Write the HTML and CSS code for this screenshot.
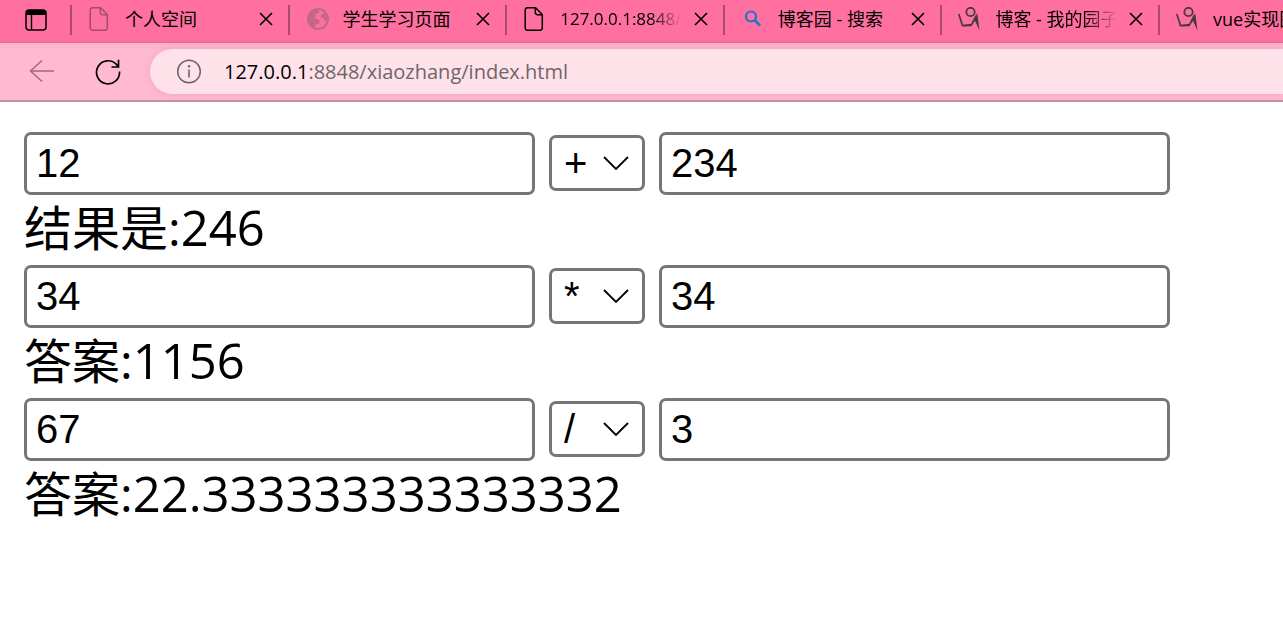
FILE: index.html
```
<!DOCTYPE html>
<html lang="zh-CN">
<head>
    <meta charset="UTF-8">
    <meta name="viewport" content="width=device-width, initial-scale=1.0">
    <title>127.0.0.1:8848/xiaozhang/index.html</title>
    <link rel="stylesheet" href="styles.css">
</head>
<body>
    <!-- 公用图标 -->
    <svg class="sprite" aria-hidden="true">
        <symbol id="icon-file" viewBox="0 0 24 24">
            <path d="M4.500 .7H12.500L19.300 7.500V21a2.300 2.300 0 0 1-2.300 2.300H4.500A2.300 2.300 0 0 1 2.200 21V3A2.300 2.300 0 0 1 4.500 .7ZM12.300 1V5.500a2.200 2.200 0 0 0 2.200 2.200H19" fill="none" stroke="currentColor" stroke-width="1.500"/>
        </symbol>
        <symbol id="icon-close" viewBox="0 0 14 14">
            <path d="M1 1L13 13M13 1L1 13" fill="none" stroke="currentColor" stroke-width="1.600"/>
        </symbol>
        <symbol id="icon-blog" viewBox="0 0 24 24">
            <circle cx="12.500" cy="5" r="4.200" fill="none" stroke="currentColor" stroke-width="1.800"/>
            <path d="M.8 7L4.500 18.600L14 17.600" fill="none" stroke="currentColor" stroke-width="1.700"/>
            <path d="M4 19.600L12.500 18L17 9L19.300 6.500L21.500 23.500L17 13.800L13.500 19.200Z" fill="currentColor"/>
        </symbol>
        <symbol id="icon-arrow" viewBox="0 0 26 14">
            <path d="M1 1L13 13L25 1" fill="none" stroke="currentColor" stroke-width="1.800"/>
        </symbol>
    </svg>

    <header class="browser">
        <div class="tab-bar">
            <button class="icon-btn menu-btn" title="标签页操作">
                <svg width="22" height="22" viewBox="0 0 22 22">
                    <rect x="1" y="1" width="20" height="20" rx="3" fill="none" stroke="#000" stroke-width="1.500"/>
                    <path d="M1 6V4a3 3 0 0 1 3-3H18a3 3 0 0 1 3 3V6Z" fill="#000"/>
                    <path d="M6.500 5V21" stroke="#000" stroke-width="1.400"/>
                </svg>
            </button>
            <div class="tabs">
                <div class="tab">
                    <svg class="tab-icon dim"><use href="#icon-file"/></svg>
                    <span class="tab-title">个人空间</span>
                    <button class="icon-btn" title="关闭"><svg class="close-icon"><use href="#icon-close"/></svg></button>
                </div>
                <div class="tab">
                    <svg class="tab-icon globe" viewBox="0 0 24 24">
                        <circle cx="12" cy="12" r="10" fill="none" stroke="currentColor" stroke-width="2"/>
                        <path d="M3 12C3 7 6 3 11 2.500L13.500 3.500L13 6L9.500 7.500L10 9.500L7.500 10.500L11.500 12L14 14L12.500 17L9.500 17.500L9 21C5 20 3 16 3 12ZM16 4L20.500 8L21.500 14L18.500 13.500L17.500 11L14.500 10.500L15 7.500L17.500 7Z" fill="currentColor"/>
                    </svg>
                    <span class="tab-title">学生学习页面</span>
                    <button class="icon-btn" title="关闭"><svg class="close-icon"><use href="#icon-close"/></svg></button>
                </div>
                <div class="tab">
                    <svg class="tab-icon"><use href="#icon-file"/></svg>
                    <span class="tab-title latin fade">127.0.0.1:8848/</span>
                    <button class="icon-btn" title="关闭"><svg class="close-icon"><use href="#icon-close"/></svg></button>
                </div>
                <div class="tab">
                    <svg class="tab-icon search" viewBox="0 0 24 24">
                        <circle cx="10" cy="9.500" r="5" fill="none" stroke="currentColor" stroke-width="2.200"/>
                        <path d="M13.500 13L19 18.500" stroke="currentColor" stroke-width="2.600"/>
                    </svg>
                    <span class="tab-title">博客园 - 搜索</span>
                    <button class="icon-btn" title="关闭"><svg class="close-icon"><use href="#icon-close"/></svg></button>
                </div>
                <div class="tab">
                    <svg class="tab-icon blog"><use href="#icon-blog"/></svg>
                    <span class="tab-title fade">博客 - 我的园子</span>
                    <button class="icon-btn" title="关闭"><svg class="close-icon"><use href="#icon-close"/></svg></button>
                </div>
                <div class="tab last">
                    <svg class="tab-icon blog"><use href="#icon-blog"/></svg>
                    <span class="tab-title">vue实现图</span>
                </div>
            </div>
        </div>

        <div class="toolbar">
            <button class="icon-btn back-btn" title="返回">
                <svg width="26" height="26" viewBox="0 0 26 26">
                    <path d="M25 12H1.500M13 1.500L1.500 12L13 22.500" fill="none" stroke="currentColor" stroke-width="1.500"/>
                </svg>
            </button>
            <button class="icon-btn" title="刷新">
                <svg width="26" height="26" viewBox="0 0 26 26">
                    <path d="M24.500 12.500A11.500 11.500 0 1 1 21.500 5.500L23 7.500M23.500 .8V8H16.500" fill="none" stroke="#000" stroke-width="1.700"/>
                </svg>
            </button>
            <div class="address">
                <svg width="26" height="26" viewBox="0 0 26 26">
                    <circle cx="13" cy="12.500" r="11.300" fill="none" stroke="currentColor" stroke-width="1.500"/>
                    <path d="M13 10.500V18.500" stroke="currentColor" stroke-width="1.600"/>
                    <circle cx="13" cy="7.300" r="1.200" fill="currentColor"/>
                </svg>
                <span class="url"><span class="host">127.0.0.1</span>:8848/xiaozhang/index.html</span>
            </div>
        </div>
    </header>

    <main id="app">
        <div class="row">
            <input type="text" value="12" aria-label="第一个数">
            <div class="select-box">
                <select aria-label="运算符">
                    <option selected>+</option>
                    <option>-</option>
                    <option>*</option>
                    <option>/</option>
                </select>
                <svg class="arrow"><use href="#icon-arrow"/></svg>
            </div>
            <input type="text" value="234" aria-label="第二个数">
        </div>
        <div class="result">结果是:<span class="number">246</span></div>

        <div class="row">
            <input type="text" value="34" aria-label="第一个数">
            <div class="select-box">
                <select aria-label="运算符">
                    <option selected>*</option>
                    <option>/</option>
                </select>
                <svg class="arrow"><use href="#icon-arrow"/></svg>
            </div>
            <input type="text" value="34" aria-label="第二个数">
        </div>
        <div class="result">答案:<span class="number">1156</span></div>

        <div class="row">
            <input type="text" value="67" aria-label="第一个数">
            <div class="select-box">
                <select aria-label="运算符">
                    <option>*</option>
                    <option selected>/</option>
                </select>
                <svg class="arrow"><use href="#icon-arrow"/></svg>
            </div>
            <input type="text" value="3" aria-label="第二个数">
        </div>
        <div class="result">答案:<span class="number">22.333333333333332</span></div>
    </main>
</body>
</html>
```

FILE: styles.css
```
* {
    box-sizing: border-box;
}

body {
    margin: 0;
    background: #fff;
    color: #000;
    font-family: "Open Sans", "Noto Sans CJK SC", sans-serif;
    overflow-x: hidden;
}

.sprite {
    display: none;
}

svg {
    display: block;
    flex: none;
}

.icon-btn {
    display: flex;
    flex: none;
    padding: 0;
    border: none;
    background: none;
    color: inherit;
    cursor: pointer;
}

/* 标签栏 */
.tab-bar {
    display: flex;
    height: 43px;
    padding: 5px 0 8px;
    background: linear-gradient(#ff70a0 40px, #ed6895);
}

.menu-btn {
    align-items: center;
    width: 70px;
    padding-left: 25px;
}

.tabs {
    display: grid;
    flex: 1;
    grid-template-columns: repeat(5, 1fr) 125px;
    min-width: 0;
}

.tab {
    display: flex;
    align-items: center;
    min-width: 0;
    padding: 0 15px 2px 16px;
    border-left: 2px solid #a74c6c;
    overflow: hidden;
}

.tab-icon {
    width: 24px;
    height: 24px;
    margin-right: 13px;
}

.dim {
    color: #a54c6b;
}

.globe {
    color: #c36887;
}

.search {
    color: #1976c8;
}

.blog {
    color: #453a40;
}

.tab-title {
    flex: 1;
    min-width: 0;
    margin-right: 12px;
    overflow: hidden;
    font-size: 18px;
    line-height: 28px;
    white-space: nowrap;
}

.latin {
    font-size: 17px;
}

.fade {
    -webkit-mask-image: linear-gradient(to left, transparent, #000 32px);
    mask-image: linear-gradient(to left, transparent, #000 32px);
}

.last {
    padding-right: 0;
}

.last .tab-title {
    margin-right: 0;
}

.close-icon {
    width: 14px;
    height: 14px;
}

/* 地址栏 */
.toolbar {
    display: flex;
    align-items: center;
    gap: 40px;
    height: 59px;
    padding: 0 0 0 29px;
    border-bottom: 2px solid #c591a4;
    background: linear-gradient(#f8b2ca, #ffbad1 8px);
}

.back-btn {
    color: #a5667c;
}

.address {
    display: flex;
    flex: 1;
    align-items: center;
    gap: 22px;
    height: 45px;
    margin-left: -11px;
    padding-left: 26px;
    border-radius: 23px 0 0 23px;
    background: #ffe1ea;
    box-shadow: 0 0 8px rgba(200, 100, 140, 0.25);
    color: #6d6669;
}

.url {
    font-size: 20px;
    line-height: 28px;
    white-space: nowrap;
}

.host {
    color: #000;
}

/* 计算器 */
#app {
    padding: 30px 24px;
}

.row {
    display: flex;
    align-items: center;
    gap: 14px;
}

input,
select {
    border: 3px solid #767676;
    border-radius: 7px;
    background: #fff;
    color: #000;
    font-family: "Liberation Sans", Arial, sans-serif;
    font-size: 40px;
}

input {
    width: 511px;
    height: 63px;
    padding: 0 9px;
}

.select-box {
    position: relative;
    flex: none;
    padding-bottom: 2px;
}

select {
    display: block;
    width: 96px;
    height: 56px;
    padding: 0 12px;
    appearance: none;
}

.arrow {
    position: absolute;
    top: 21px;
    right: 16px;
    width: 26px;
    height: 14px;
    pointer-events: none;
}

.result {
    height: 70px;
    font-size: 48px;
    line-height: 64px;
    white-space: nowrap;
}

.number {
    font-size: 49px;
}
```
